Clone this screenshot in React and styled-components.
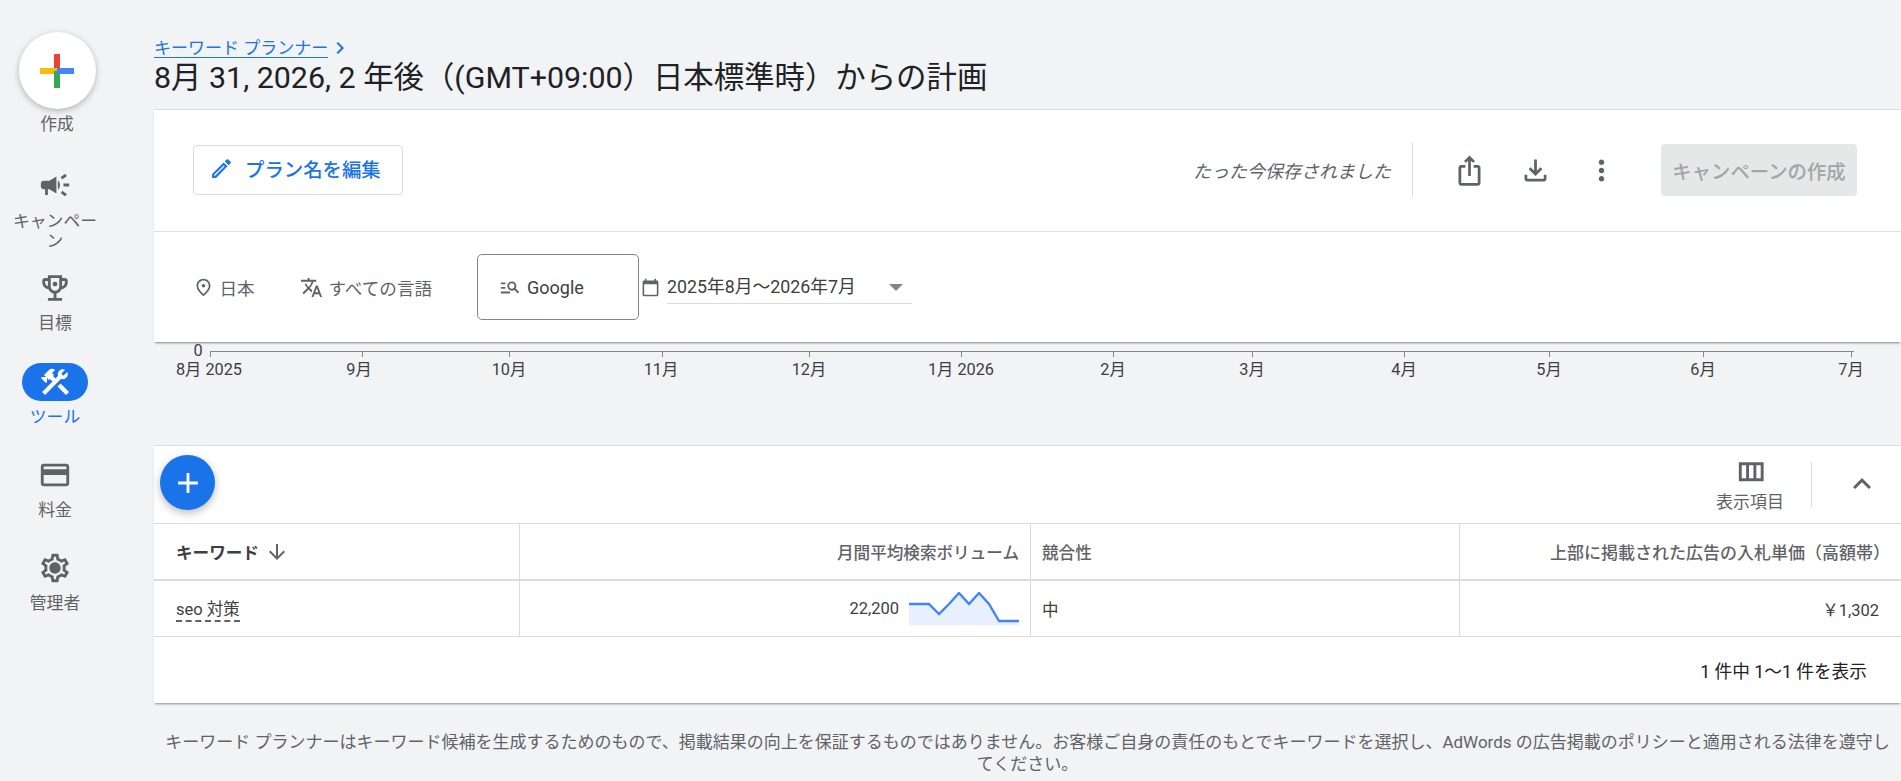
import React from 'react'
import styled, { createGlobalStyle } from 'styled-components'

const GlobalStyle = createGlobalStyle`
  html, body {
    margin: 0;
    padding: 0;
    background: #f1f3f5;
    overflow: hidden;
    font-family: Roboto, "Noto Sans CJK JP", sans-serif;
    color: #3c4043;
  }
`

const Icon = ({ d, size = 24, color = 'currentColor', children }) => (
  <svg width={size} height={size} viewBox="0 0 24 24" fill={color}>
    {d && <path d={d} />}
    {children}
  </svg>
)

const paths = {
  edit: 'M14.06 9.02l.92.92L5.92 19H5v-.92l9.06-9.06M17.66 3c-.25 0-.51.1-.7.29l-1.83 1.83 3.75 3.75 1.83-1.83c.39-.39.39-1.02 0-1.41l-2.34-2.34c-.2-.2-.45-.29-.71-.29zm-3.6 3.19L3 17.25V21h3.75L17.81 9.94l-3.75-3.75z',
  campaign: 'M18 11v2h4v-2h-4zm-2 6.61c.96.71 2.21 1.65 3.2 2.39.4-.53.8-1.07 1.2-1.6-.99-.74-2.24-1.68-3.2-2.4-.4.54-.8 1.08-1.2 1.61zM20.4 5.6c-.4-.53-.8-1.07-1.2-1.6-.99.74-2.24 1.68-3.2 2.4.4.53.8 1.07 1.2 1.6.96-.72 2.21-1.65 3.2-2.4zM4 9c-1.1 0-2 .9-2 2v2c0 1.1.9 2 2 2h1v4h2v-4h1l5 3V6L8 9H4zm11.5 3c0-1.33-.58-2.53-1.5-3.35v6.69c.92-.81 1.5-2.01 1.5-3.34z',
  trophy: 'M19 5h-2V3H7v2H5c-1.1 0-2 .9-2 2v1c0 2.55 1.92 4.63 4.39 4.94.63 1.5 1.98 2.63 3.61 2.96V19H7v2h10v-2h-4v-3.1c1.63-.33 2.98-1.46 3.61-2.96C19.08 12.63 21 10.55 21 8V7c0-1.1-.9-2-2-2zM5 8V7h2v3.82C5.84 10.4 5 9.3 5 8zm7 6c-1.65 0-3-1.35-3-3V5h6v6c0 1.65-1.35 3-3 3zm7-6c0 1.3-.84 2.4-2 2.82V7h2v1z',
  tools: 'M13.783 15.172l2.121-2.121 5.996 5.996-2.121 2.121zM17.5 10c1.93 0 3.5-1.57 3.5-3.5 0-.58-.16-1.12-.41-1.6l-2.7 2.7-1.49-1.49 2.7-2.7c-.48-.25-1.02-.41-1.6-.41C15.57 3 14 4.57 14 6.5c0 .41.08.8.21 1.16l-1.85 1.85-1.78-1.78.71-.71-1.41-1.41L12 3.49c-1.17-1.17-3.07-1.17-4.24 0L4.22 7.03l1.41 1.41H2.81l-.71.71 3.54 3.54.71-.71V9.15l1.41 1.41.71-.71 1.78 1.78-7.41 7.41 2.12 2.12L16.34 9.79c.36.13.75.21 1.16.21z',
  card: 'M20 4H4c-1.11 0-1.99.89-1.99 2L2 18c0 1.11.89 2 2 2h16c1.11 0 2-.89 2-2V6c0-1.11-.89-2-2-2zm0 14H4v-6h16v6zm0-10H4V6h16v2z',
  gear: 'M19.43 12.98c.04-.32.07-.64.07-.98 0-.34-.03-.66-.07-.98l2.11-1.65c.19-.15.24-.42.12-.64l-2-3.46c-.09-.16-.26-.25-.44-.25-.06 0-.12.01-.17.03l-2.49 1c-.52-.4-1.08-.73-1.69-.98l-.38-2.65C14.46 2.18 14.25 2 14 2h-4c-.25 0-.46.18-.49.42l-.38 2.65c-.61.25-1.17.59-1.69.98l-2.49-1c-.06-.02-.12-.03-.18-.03-.17 0-.34.09-.43.25l-2 3.46c-.13.22-.07.49.12.64l2.11 1.65c-.04.32-.07.65-.07.98 0 .33.03.66.07.98l-2.11 1.65c-.19.15-.24.42-.12.64l2 3.46c.09.16.26.25.44.25.06 0 .12-.01.17-.03l2.49-1c.52.4 1.08.73 1.69.98l.38 2.65c.03.24.24.42.49.42h4c.25 0 .46-.18.49-.42l.38-2.65c.61-.25 1.17-.59 1.69-.98l2.49 1c.06.02.12.03.18.03.17 0 .34-.09.43-.25l2-3.46c.12-.22.07-.49-.12-.64l-2.11-1.65zm-1.98-1.71c.04.31.05.52.05.73 0 .21-.02.43-.05.73l-.14 1.13.89.7 1.08.84-.7 1.21-1.27-.51-1.04-.42-.9.68c-.43.32-.84.56-1.25.73l-1.06.43-.16 1.13-.2 1.35h-1.4l-.19-1.35-.16-1.13-1.06-.43c-.43-.18-.83-.41-1.23-.71l-.91-.7-1.06.43-1.27.51-.7-1.21 1.08-.84.89-.7-.14-1.13c-.03-.31-.05-.54-.05-.74s.02-.43.05-.73l.14-1.13-.89-.7-1.08-.84.7-1.21 1.27.51 1.04.42.9-.68c.43-.32.84-.56 1.25-.73l1.06-.43.16-1.13.2-1.35h1.39l.19 1.35.16 1.13 1.06.43c.43.18.83.41 1.23.71l.91.7 1.06-.43 1.27-.51.7 1.21-1.07.85-.89.7.14 1.13zM12 8c-2.21 0-4 1.79-4 4s1.79 4 4 4 4-1.79 4-4-1.79-4-4-4z',
  place: 'M12 12c-1.1 0-2-.9-2-2s.9-2 2-2 2 .9 2 2-.9 2-2 2zm6-1.8C18 6.57 15.35 4 12 4s-6 2.57-6 6.2c0 2.34 1.95 5.44 6 9.14 4.05-3.7 6-6.8 6-9.14zM12 2c4.2 0 8 3.22 8 8.2 0 3.32-2.67 7.25-8 11.8-5.33-4.55-8-8.48-8-11.8C4 5.22 7.8 2 12 2z',
  translate: 'M12.87 15.07l-2.54-2.51.03-.03c1.74-1.94 2.98-4.17 3.71-6.53H17V4h-7V2H8v2H1v1.99h11.17C11.5 7.92 10.44 9.75 9 11.35 8.07 10.32 7.3 9.19 6.69 8h-2c.73 1.63 1.73 3.17 2.98 4.56l-5.09 5.02L4 19l5-5 3.11 3.11.76-2.04zM18.5 10h-2L12 22h2l1.12-3h4.75L21 22h2l-4.5-12zm-2.62 7l1.62-4.33L19.12 17h-3.24z',
  search: 'M7 9H2V7h5v2zm0 3H2v2h5v-2zm13.59 7l-3.83-3.83c-.8.52-1.74.83-2.76.83-2.76 0-5-2.24-5-5s2.24-5 5-5 5 2.24 5 5c0 1.02-.31 1.96-.83 2.75L22 17.59 20.59 19zM17 11c0-1.65-1.35-3-3-3s-3 1.35-3 3 1.35 3 3 3 3-1.35 3-3zM2 19h10v-2H2v2z',
  calendar: 'M20 3h-1V1h-2v2H7V1H5v2H4c-1.1 0-2 .9-2 2v16c0 1.1.9 2 2 2h16c1.1 0 2-.9 2-2V5c0-1.1-.9-2-2-2zm0 18H4V8h16v13z',
  share: 'M16 5l-1.42 1.42-1.59-1.59V16h-1.98V4.83L9.42 6.42 8 5l4-4 4 4zm4 5v11c0 1.1-.9 2-2 2H6c-1.11 0-2-.9-2-2V10c0-1.11.89-2 2-2h3v2H6v11h12V10h-3V8h3c1.1 0 2 .89 2 2z',
  download: 'M18 15v3H6v-3H4v3c0 1.1.9 2 2 2h12c1.1 0 2-.9 2-2v-3h-2zm-1-4l-1.41-1.41L13 12.17V4h-2v8.17L8.41 9.59 7 11l5 5 5-5z',
  more: 'M12 8c1.1 0 2-.9 2-2s-.9-2-2-2-2 .9-2 2 .9 2 2 2zm0 2c-1.1 0-2 .9-2 2s.9 2 2 2 2-.9 2-2-.9-2-2-2zm0 6c-1.1 0-2 .9-2 2s.9 2 2 2 2-.9 2-2-.9-2-2-2z',
  columns: 'M4 5v13h17V5H4zm10 2v9h-3V7h3zM6 7h3v9H6V7zm13 9h-3V7h3v9z',
  up: 'M12 8l-6 6 1.41 1.41L12 10.83l4.59 4.58L18 14z',
  down: 'M20 12l-1.41-1.41L13 16.17V4h-2v12.17l-5.58-5.59L4 12l8 8 8-8z',
  add: 'M19 13h-6v6h-2v-6H5v-2h6V5h2v6h6v2z',
  chevron: 'M8.59 16.59L10 18l6-6-6-6-1.41 1.41L13.17 12z',
}

// label centre and tick position on the axis
const months = [
  ['8月 2025', 55, 56],
  ['9月', 205, 208],
  ['10月', 355, 355],
  ['11月', 507, 508],
  ['12月', 655, 655],
  ['1月 2026', 807, 807],
  ['2月', 959, 959],
  ['3月', 1098, 1098],
  ['4月', 1250, 1250],
  ['5月', 1395, 1395],
  ['6月', 1549, 1549],
  ['7月', 1697, 1697],
]

const navItems = [
  { label: 'キャンペーン', icon: paths.campaign, wrapped: true },
  { label: '目標', icon: paths.trophy, dot: true },
  { label: 'ツール', icon: paths.tools, active: true },
  { label: '料金', icon: paths.card },
  { label: '管理者', icon: paths.gear },
]

const App = () => {
  return (
    <Page>
      <GlobalStyle />
      <Sidebar>
        <CreateGroup>
          <CreateButton>
            <svg width="34" height="34" viewBox="0 0 34 34">
              <rect x="14" y="0" width="6" height="17" fill="#ea4335" />
              <rect x="0" y="14" width="17" height="6" fill="#fbbc04" />
              <rect x="14" y="17" width="6" height="17" fill="#34a853" />
              <rect x="17" y="14" width="17" height="6" fill="#4285f4" />
            </svg>
          </CreateButton>
          <NavLabel>作成</NavLabel>
        </CreateGroup>
        <NavList>
          {navItems.map((item) => (
            <NavItem key={item.label} $wrapped={item.wrapped} $active={item.active}>
              <NavIcon $active={item.active}>
                <Icon d={item.icon} size={34}>
                  {item.dot && <circle cx="12" cy="9.2" r="1.7" />}
                </Icon>
              </NavIcon>
              <NavLabel $active={item.active}>{item.label}</NavLabel>
            </NavItem>
          ))}
        </NavList>
      </Sidebar>

      <Main>
        <Heading>
          <Crumb>
            <CrumbLink>キーワード プランナー</CrumbLink>
            <Icon d={paths.chevron} size={24} color="#1a73e8" />
          </Crumb>
          <Title>8月 31, 2026, 2 年後（(GMT+09:00）日本標準時）からの計画</Title>
        </Heading>

        <TopPanel>
          <ActionRow>
            <EditButton>
              <Icon d={paths.edit} size={25} />
              プラン名を編集
            </EditButton>
            <Actions>
              <SavedText>たった今保存されました</SavedText>
              <ActionDivider />
              <IconGroup>
                <IconSlot>
                  <Icon d={paths.share} size={33} color="#5f6368" />
                </IconSlot>
                <IconSlot>
                  <Icon d={paths.download} size={33} color="#5f6368" />
                </IconSlot>
                <IconSlot>
                  <Icon d={paths.more} size={33} color="#5f6368" />
                </IconSlot>
              </IconGroup>
              <CampaignButton>キャンペーンの作成</CampaignButton>
            </Actions>
          </ActionRow>
          <FilterRow>
            <Filter $width={107}>
              <Icon d={paths.place} size={21} color="#5f6368" />
              日本
            </Filter>
            <Filter $width={181}>
              <Icon d={paths.translate} size={23} color="#5f6368" />
              すべての言語
            </Filter>
            <NetworkBox>
              <Icon d={paths.search} size={22} color="#5f6368" />
              Google
            </NetworkBox>
            <DateGroup>
              <Icon d={paths.calendar} size={19} color="#5f6368" />
              <DateField>
                2025年8月～2026年7月
                <Caret />
              </DateField>
            </DateGroup>
          </FilterRow>
        </TopPanel>

        <ChartArea>
          <Axis width="1747" height="103" viewBox="0 0 1747 103">
            <text x="44" y="14" textAnchor="middle">0</text>
            <line x1="56.5" y1="9.5" x2="1700" y2="9.5" stroke="#80868b" />
            {months.map(([label, x, tick]) => (
              <g key={label}>
                <line x1={tick + 0.5} y1="9" x2={tick + 0.5} y2="15" stroke="#80868b" />
                <text x={x} y="33" textAnchor="middle">{label}</text>
              </g>
            ))}
          </Axis>
        </ChartArea>

        <TableCard>
          <Toolbar>
            <Fab>
              <Icon d={paths.add} size={34} />
            </Fab>
            <ToolbarRight>
              <ColumnsButton>
                <Icon d={paths.columns} size={35} color="#5f6368" />
                <span>表示項目</span>
              </ColumnsButton>
              <ToolbarDivider />
              <CollapseButton>
                <Icon d={paths.up} size={36} color="#5f6368" />
              </CollapseButton>
            </ToolbarRight>
          </Toolbar>
          <HeaderRow>
            <KeywordHead>
              キーワード
              <Icon d={paths.down} size={24} color="#5f6368" />
            </KeywordHead>
            <HeadCell $right>月間平均検索ボリューム</HeadCell>
            <HeadCell>競合性</HeadCell>
            <HeadCell $right $size={17}>上部に掲載された広告の入札単価（高額帯）</HeadCell>
          </HeaderRow>
          <DataRow>
            <DataCell>
              <Keyword>seo 対策</Keyword>
            </DataCell>
            <DataCell $right>
              22,200
              <Spark width="110" height="34" viewBox="0 0 110 34">
                <path d="M0 12H20L30 22L40 12L50 1L60 12L70 1L80 12L90 29H110V33H0Z" fill="#e8f0fe" />
                <path d="M0 12H20L30 22L40 12L50 1L60 12L70 1L80 12L90 29H110" fill="none" stroke="#4285f4" strokeWidth="2.4" />
              </Spark>
            </DataCell>
            <DataCell>中</DataCell>
            <DataCell $right>￥1,302</DataCell>
          </DataRow>
          <TableFooter>1 件中 1～1 件を表示</TableFooter>
        </TableCard>

        <Disclaimer>
          キーワード プランナーはキーワード候補を生成するためのもので、掲載結果の向上を保証するものではありません。お客様ご自身の責任のもとでキーワードを選択し、AdWords の広告掲載のポリシーと適用される法律を遵守してください。
        </Disclaimer>
      </Main>
    </Page>
  )
}

export default App

const Page = styled.div`
  display: flex;
  width: 1901px;
  height: 781px;
  overflow: hidden;
  font-size: 16px;
`

const Sidebar = styled.nav`
  flex: 0 0 154px;
  width: 154px;
  padding: 32px 44px 0 0;
  box-sizing: border-box;
`

const CreateGroup = styled.div`
  display: flex;
  flex-direction: column;
  align-items: center;
  gap: 5px;
  margin: 0 -4px 37px 0;
`

const CreateButton = styled.div`
  width: 77px;
  height: 77px;
  border-radius: 50%;
  background: #fff;
  box-shadow: 0 2px 6px rgba(60, 64, 67, 0.35);
  display: flex;
  align-items: center;
  justify-content: center;
`

const NavList = styled.div`
  display: flex;
  flex-direction: column;
  align-items: center;
`

const NavItem = styled.div`
  width: 92px;
  display: flex;
  flex-direction: column;
  align-items: center;
  margin-top: ${(p) => (p.$active ? '-4px' : '0')};
  margin-bottom: ${(p) => (p.$wrapped ? '23px' : '33.5px')};
`

const NavIcon = styled.div`
  display: flex;
  align-items: center;
  justify-content: center;
  width: 66px;
  height: ${(p) => (p.$active ? '38px' : '28px')};
  margin-bottom: ${(p) => (p.$active ? '6.5px' : '11.5px')};
  border-radius: 19px;
  background: ${(p) => (p.$active ? '#1a73e8' : 'transparent')};
  color: ${(p) => (p.$active ? '#fff' : '#5f6368')};
`

const NavLabel = styled.div`
  font-size: 16.8px;
  line-height: 20px;
  text-align: center;
  color: ${(p) => (p.$active ? '#1a73e8' : '#5f6368')};
`

const Main = styled.main`
  flex: 1;
  min-width: 0;
  display: flex;
  flex-direction: column;
`

const Heading = styled.header`
  height: 109px;
  padding-top: 39px;
  box-sizing: border-box;
`

const Crumb = styled.div`
  display: flex;
  align-items: center;
  height: 18px;
  color: #1a73e8;
`

const CrumbLink = styled.span`
  font-size: 17px;
  line-height: 18px;
  border-bottom: 1px solid #1a73e8;
`

const Title = styled.h1`
  margin: 0;
  font-size: 30.4px;
  font-weight: 400;
  line-height: 42px;
  color: #202124;
  white-space: nowrap;
`

const TopPanel = styled.section`
  position: relative;
  z-index: 2;
  background: #fff;
  border-top: 1px solid #dadce0;
  box-shadow: 0 2px 2px -1px rgba(60, 64, 67, 0.6);
`

const ActionRow = styled.div`
  height: 121px;
  padding: 0 44px 0 39px;
  display: flex;
  align-items: center;
  justify-content: space-between;
  border-bottom: 1px solid #e0e0e0;
`

const EditButton = styled.button`
  display: flex;
  align-items: center;
  gap: 11px;
  width: 210px;
  height: 50px;
  margin-bottom: 1px;
  padding: 0 0 3px 15px;
  background: #fff;
  border: 1px solid #dadce0;
  border-radius: 4px;
  color: #1a73e8;
  font: 500 19.4px Roboto, "Noto Sans CJK JP", sans-serif;
  white-space: nowrap;
`

const Actions = styled.div`
  display: flex;
  align-items: center;
  margin-bottom: 1px;
`

const SavedText = styled.span`
  font-size: 18px;
  font-style: italic;
  color: #5f6368;
  margin-right: 21px;
`

const ActionDivider = styled.div`
  width: 1px;
  height: 54px;
  background: #dadce0;
`

const IconGroup = styled.div`
  display: flex;
  margin: 0 27px 0 23px;
`

const IconSlot = styled.div`
  width: 66px;
  display: flex;
  justify-content: center;
`

const CampaignButton = styled.div`
  width: 196px;
  height: 52px;
  display: flex;
  align-items: center;
  justify-content: center;
  border-radius: 4px;
  background: #e6e7e7;
  color: #a3a5a6;
  font-size: 19.4px;
  font-weight: 500;
  white-space: nowrap;
`

const FilterRow = styled.div`
  height: 110px;
  padding-left: 39px;
  display: flex;
  align-items: center;
`

const Filter = styled.div`
  width: ${(p) => p.$width}px;
  display: flex;
  align-items: center;
  gap: 5.5px;
  color: #5f6368;
  font-size: 17.6px;
  white-space: nowrap;
`

const NetworkBox = styled.div`
  width: 162px;
  height: 66px;
  box-sizing: border-box;
  padding-left: 21px;
  margin-left: -4px;
  display: flex;
  align-items: center;
  gap: 6px;
  border: 1px solid #80868b;
  border-radius: 5px;
  color: #3c4043;
  font-size: 18px;
`

const DateGroup = styled.div`
  display: flex;
  align-items: center;
  gap: 7px;
  margin: 0 0 0 2px;
`

const DateField = styled.div`
  position: relative;
  width: 245px;
  height: 32px;
  line-height: 32px;
  margin-top: 1px;
  border-bottom: 1px solid #dadce0;
  color: #3c4043;
  font-size: 17.8px;
  white-space: nowrap;
`

const Caret = styled.span`
  position: absolute;
  right: 9px;
  top: 13px;
  width: 0;
  height: 0;
  border-left: 7px solid transparent;
  border-right: 7px solid transparent;
  border-top: 7px solid #80868b;
`

const ChartArea = styled.div`
  height: 103px;
  flex: none;
`

const Axis = styled.svg`
  display: block;
  text {
    font: 16.3px Roboto, "Noto Sans CJK JP", sans-serif;
    fill: #3c4043;
  }
`

const TableCard = styled.section`
  flex: none;
  background: #fff;
  border-top: 1px solid #dadce0;
  box-shadow: 0 2px 2px -1px rgba(60, 64, 67, 0.55);
`

const Toolbar = styled.div`
  height: 77px;
  display: flex;
  align-items: flex-start;
  justify-content: space-between;
  border-bottom: 1px solid #dadce0;
`

const Fab = styled.div`
  width: 55px;
  height: 55px;
  margin: 9px 0 0 6px;
  border-radius: 50%;
  background: #1a73e8;
  color: #fff;
  display: flex;
  align-items: center;
  justify-content: center;
  box-shadow: 0 3px 8px rgba(60, 64, 67, 0.35);
`

const ToolbarRight = styled.div`
  display: flex;
  align-items: flex-start;
`

const ColumnsButton = styled.div`
  width: 80px;
  margin-right: 21px;
  padding-top: 9px;
  display: flex;
  flex-direction: column;
  align-items: center;
  gap: 2px;
  color: #5f6368;
  font-size: 17px;
  line-height: 20px;
`

const ToolbarDivider = styled.div`
  width: 1px;
  height: 45px;
  margin-top: 16px;
  background: #dadce0;
`

const CollapseButton = styled.div`
  width: 89px;
  padding: 20px 21px 0 0;
  box-sizing: border-box;
  display: flex;
  justify-content: flex-end;
`

const columns = `
  display: grid;
  grid-template-columns: 365px 511px 429px 442px;
`

const HeaderRow = styled.div`
  ${columns}
  height: 55px;
  border-bottom: 2px solid #dadce0;
`

const HeadCell = styled.div`
  display: flex;
  align-items: center;
  justify-content: ${(p) => (p.$right ? 'flex-end' : 'flex-start')};
  padding: 0 ${(p) => (p.$right ? '11px' : '0')} 0 11px;
  border-left: 1px solid #dadce0;
  font-size: ${(p) => p.$size || 16.6}px;
  font-weight: 500;
  color: #5f6368;
  white-space: nowrap;
`

const KeywordHead = styled(HeadCell)`
  border-left: none;
  padding-left: 22px;
  gap: 6px;
  font-weight: 700;
  color: #3c4043;
`

const DataRow = styled.div`
  ${columns}
  height: 55px;
  border-bottom: 1px solid #dadce0;
`

const DataCell = styled.div`
  display: flex;
  align-items: center;
  justify-content: ${(p) => (p.$right ? 'flex-end' : 'flex-start')};
  padding: 0 ${(p) => (p.$right ? '11px' : '0')} 0 11px;
  gap: 10px;
  font-size: 16.5px;
  color: #3c4043;
  &:first-child {
    padding-left: 22px;
  }
  & + & {
    border-left: 1px solid #dadce0;
  }
  &:last-child {
    padding-right: 22px;
  }
`

const Keyword = styled.span`
  border-bottom: 2px dashed #5f6368;
  line-height: 20px;
  margin-top: 4px;
`

const Spark = styled.svg`
  display: block;
`

const TableFooter = styled.div`
  height: 66px;
  padding: 0 34px 0 0;
  display: flex;
  align-items: center;
  justify-content: flex-end;
  color: #202124;
  font-size: 17.7px;
`

const Disclaimer = styled.p`
  margin: 28px 0 0;
  padding: 0 6px;
  text-align: center;
  font-size: 17px;
  line-height: 22px;
  color: #5f6368;
`
